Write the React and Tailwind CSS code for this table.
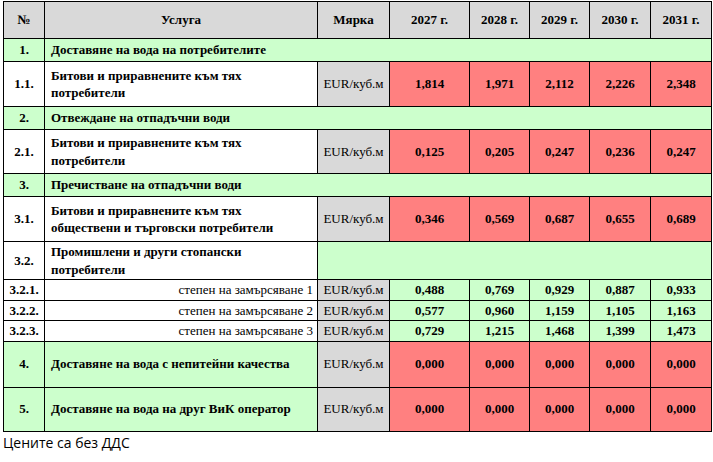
import React from 'react';

const YEARS = ['2027 г.', '2028 г.', '2029 г.', '2030 г.', '2031 г.'];
const UNIT = 'EUR/куб.м';

const GREEN = 'bg-[#ccffcc]';
const RED = 'bg-[#ff8080]';
const GRAY = 'bg-[#d9d9d9]';

const cell = 'border border-black p-0';

function Section({ no, title, h }) {
  return (
    <tr className={h}>
      <td className={`${cell} ${GREEN} text-center font-bold`}>{no}</td>
      <td colSpan={7} className={`${cell} ${GREEN} px-[6px] font-bold`}>{title}</td>
    </tr>
  );
}

function PriceRow({ no, title, values, h, titleBg = 'bg-white', noBg = 'bg-white', valBg = RED }) {
  return (
    <tr className={h}>
      <td className={`${cell} ${noBg} text-center font-bold`}>{no}</td>
      <td className={`${cell} ${titleBg} px-[6px] font-bold leading-[17.5px]`}>{title}</td>
      <td className={`${cell} ${GRAY} text-center`}>{UNIT}</td>
      {values.map((v, i) => (
        <td key={i} className={`${cell} ${valBg} text-center font-bold`}>{v}</td>
      ))}
    </tr>
  );
}

function SubRow({ no, title, values }) {
  return (
    <tr className="h-[20px]">
      <td className={`${cell} bg-white text-center font-bold`}>{no}</td>
      <td className={`${cell} bg-white text-right pr-[4px]`}>{title}</td>
      <td className={`${cell} ${GRAY} text-center`}>{UNIT}</td>
      {values.map((v, i) => (
        <td key={i} className={`${cell} ${GREEN} text-center font-bold`}>{v}</td>
      ))}
    </tr>
  );
}

export default function App() {
  return (
    <div className="w-[713px] h-[462px] bg-white pl-[3px] pt-[1px] text-black">
      <table
        className="table-fixed border-collapse w-[708px] text-[13px] text-black"
        style={{ fontFamily: '"Liberation Serif", "Times New Roman", serif' }}
      >
        <colgroup>
          <col className="w-[41px]" />
          <col className="w-[273px]" />
          <col className="w-[72px]" />
          <col className="w-[80px]" />
          <col className="w-[60px]" />
          <col className="w-[60px]" />
          <col className="w-[61px]" />
          <col className="w-[61px]" />
        </colgroup>
        <tbody>
          <tr className="h-[37px]">
            <td className={`${cell} ${GRAY} text-center font-bold`}>№</td>
            <td className={`${cell} ${GRAY} text-center font-bold`}>Услуга</td>
            <td className={`${cell} ${GRAY} text-center font-bold`}>Мярка</td>
            {YEARS.map((y) => (
              <td key={y} className={`${cell} ${GRAY} text-center font-bold`}>{y}</td>
            ))}
          </tr>

          <Section no="1." title="Доставяне на вода на потребителите" h="h-[23px]" />
          <PriceRow
            no="1.1."
            title={<>Битови и приравнените към тях<br />потребители</>}
            values={['1,814', '1,971', '2,112', '2,226', '2,348']}
            h="h-[45px]"
          />

          <Section no="2." title="Отвеждане на отпадъчни води" h="h-[23px]" />
          <PriceRow
            no="2.1."
            title={<>Битови и приравнените към тях<br />потребители</>}
            values={['0,125', '0,205', '0,247', '0,236', '0,247']}
            h="h-[44px]"
          />

          <Section no="3." title="Пречистване на отпадъчни води" h="h-[23px]" />
          <PriceRow
            no="3.1."
            title={<>Битови и приравнените към тях<br />обществени и търговски потребители</>}
            values={['0,346', '0,569', '0,687', '0,655', '0,689']}
            h="h-[45px]"
          />

          <tr className="h-[38px]">
            <td className={`${cell} bg-white text-center font-bold`}>3.2.</td>
            <td className={`${cell} bg-white px-[6px] font-bold leading-[17.5px]`}>
              Промишлени и други стопански<br />потребители
            </td>
            <td colSpan={6} className={`${cell} ${GREEN}`} />
          </tr>
          <SubRow no="3.2.1." title="степен на замърсяване 1" values={['0,488', '0,769', '0,929', '0,887', '0,933']} />
          <SubRow no="3.2.2." title="степен на замърсяване 2" values={['0,577', '0,960', '1,159', '1,105', '1,163']} />
          <SubRow no="3.2.3." title="степен на замърсяване 3" values={['0,729', '1,215', '1,468', '1,399', '1,473']} />

          <PriceRow
            no="4."
            title="Доставяне на вода с непитейни качества"
            values={['0,000', '0,000', '0,000', '0,000', '0,000']}
            h="h-[46px]"
            noBg={GREEN}
            titleBg={GREEN}
          />
          <PriceRow
            no="5."
            title="Доставяне на вода на друг ВиК оператор"
            values={['0,000', '0,000', '0,000', '0,000', '0,000']}
            h="h-[44px]"
            noBg={GREEN}
            titleBg={GREEN}
          />
        </tbody>
      </table>
      <p
        className="text-[14px] leading-[20px] pt-[1px]"
        style={{ fontFamily: '"Open Sans", "Noto Sans", sans-serif' }}
      >
        Цените са без ДДС
      </p>
    </div>
  );
}
